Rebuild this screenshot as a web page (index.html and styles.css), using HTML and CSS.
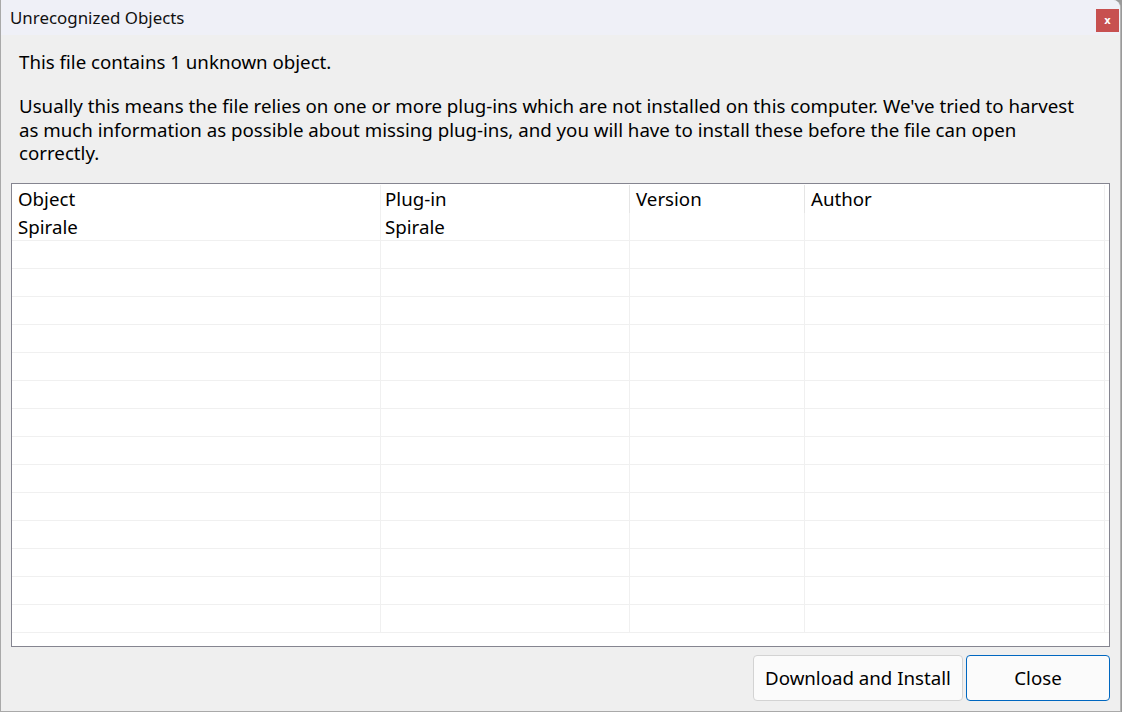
FILE: index.html
```html
<!DOCTYPE html>
<html>
<head>
<meta charset="utf-8">
<link rel="stylesheet" href="styles.css">
</head>
<body>
<div class="window">
  <div class="titlebar">
    <span class="title">Unrecognized Objects</span>
    <span class="close-x">x</span>
  </div>
  <div class="content">
    <p class="lead">This file contains 1 unknown object.</p>
    <p class="info">Usually this means the file relies on one or more plug-ins which are not installed on this computer. We've tried to harvest<br>as much information as possible about missing plug-ins, and you will have to install these before the file can open<br>correctly.</p>
    <div class="table">
      <div class="row head">
        <div class="cell">Object</div><div class="cell">Plug-in</div><div class="cell">Version</div><div class="cell">Author</div>
      </div>
      <div class="row"><div class="cell">Spirale</div><div class="cell">Spirale</div><div class="cell"></div><div class="cell"></div></div>
      <div class="row"><div class="cell"></div><div class="cell"></div><div class="cell"></div><div class="cell"></div></div>
      <div class="row"><div class="cell"></div><div class="cell"></div><div class="cell"></div><div class="cell"></div></div>
      <div class="row"><div class="cell"></div><div class="cell"></div><div class="cell"></div><div class="cell"></div></div>
      <div class="row"><div class="cell"></div><div class="cell"></div><div class="cell"></div><div class="cell"></div></div>
      <div class="row"><div class="cell"></div><div class="cell"></div><div class="cell"></div><div class="cell"></div></div>
      <div class="row"><div class="cell"></div><div class="cell"></div><div class="cell"></div><div class="cell"></div></div>
      <div class="row"><div class="cell"></div><div class="cell"></div><div class="cell"></div><div class="cell"></div></div>
      <div class="row"><div class="cell"></div><div class="cell"></div><div class="cell"></div><div class="cell"></div></div>
      <div class="row"><div class="cell"></div><div class="cell"></div><div class="cell"></div><div class="cell"></div></div>
      <div class="row"><div class="cell"></div><div class="cell"></div><div class="cell"></div><div class="cell"></div></div>
      <div class="row"><div class="cell"></div><div class="cell"></div><div class="cell"></div><div class="cell"></div></div>
      <div class="row"><div class="cell"></div><div class="cell"></div><div class="cell"></div><div class="cell"></div></div>
      <div class="row"><div class="cell"></div><div class="cell"></div><div class="cell"></div><div class="cell"></div></div>
      <div class="row last"><div class="cell"></div><div class="cell"></div><div class="cell"></div><div class="cell"></div></div>
    </div>
    <div class="footer">
      <button class="btn">Download and Install</button>
      <button class="btn primary">Close</button>
    </div>
  </div>
</div>
</body>
</html>
```
FILE: styles.css
```css
html, body {
  margin: 0;
  padding: 0;
  background: #9a9a9a;
}
body {
  font-family: "Noto Sans", "Open Sans", sans-serif;
  color: #000;
}
.window {
  width: 1119px;
  height: 711px;
  background: #efefef;
  border-left: 1px solid #a9a9a9;
  border-right: 1px solid #b4b4b4;
  border-bottom: 1px solid #a9a9a9;
  border-radius: 0 8px 0 0;
  display: flex;
  flex-direction: column;
  overflow: hidden;
}
.titlebar {
  height: 35px;
  background: #eff0f7;
  display: flex;
  align-items: center;
  justify-content: space-between;
  padding: 0 1px 0 9px;
}
.title {
  font-size: 16.9px;
  color: #111;
  margin-top: -1px;
}
.close-x {
  width: 23px;
  height: 23px;
  background: #c75050;
  color: #fff;
  font-family: "DejaVu Sans", sans-serif;
  font-weight: bold;
  font-size: 10px;
  display: flex;
  align-items: center;
  justify-content: center;
  margin-top: 5px;
}
.content {
  flex: 1;
  display: flex;
  flex-direction: column;
  padding: 0 10px 0 10px;
}
.lead {
  margin: 15px 0 0 8px;
  font-size: 18.7px;
  line-height: 24px;
}
.info {
  margin: 20px 0 0 8px;
  font-size: 18.7px;
  line-height: 23.5px;
}
.table {
  margin-top: 18px;
  height: 462px;
  background: #fff;
  border: 1px solid #858590;
  display: flex;
  flex-direction: column;
  overflow: hidden;
}
.row {
  display: grid;
  grid-template-columns: 368px 250px 175px 300px 1fr;
  height: 28px;
  flex: none;
  border-bottom: 1px solid #f0f0f0;
  box-sizing: border-box;
}
.row.head {
  height: 29px;
  border-bottom: none;
}
.cell {
  font-size: 18.7px;
  line-height: 27px;
  padding-left: 6px;
  border-right: 1px solid #f0f0f0;
  white-space: nowrap;
}
.head .cell {
  border-right: 1px solid #e5e5e5;
  padding-top: 1px;
  line-height: 26px;
  margin-top: 1px;
}
.row .cell:nth-child(1) { border-right: none; }
.row .cell:nth-child(2) { border-left: 1px solid #f0f0f0; padding-left: 4px; }
.row .cell:nth-child(4) { border-right: 1px solid #f0f0f0; }
.footer {
  display: flex;
  justify-content: flex-end;
  gap: 3px;
  margin-top: 8px;
}
.btn {
  font-family: "Noto Sans", "Open Sans", sans-serif;
  font-size: 18.7px;
  color: #000;
  height: 46px;
  background: #fbfbfb;
  border: 1px solid #d3d3d3;
  border-radius: 4px;
  padding: 0;
  width: 210px;
}
.btn.primary {
  width: 144px;
  border: 1px solid #0067c0;
}
```
